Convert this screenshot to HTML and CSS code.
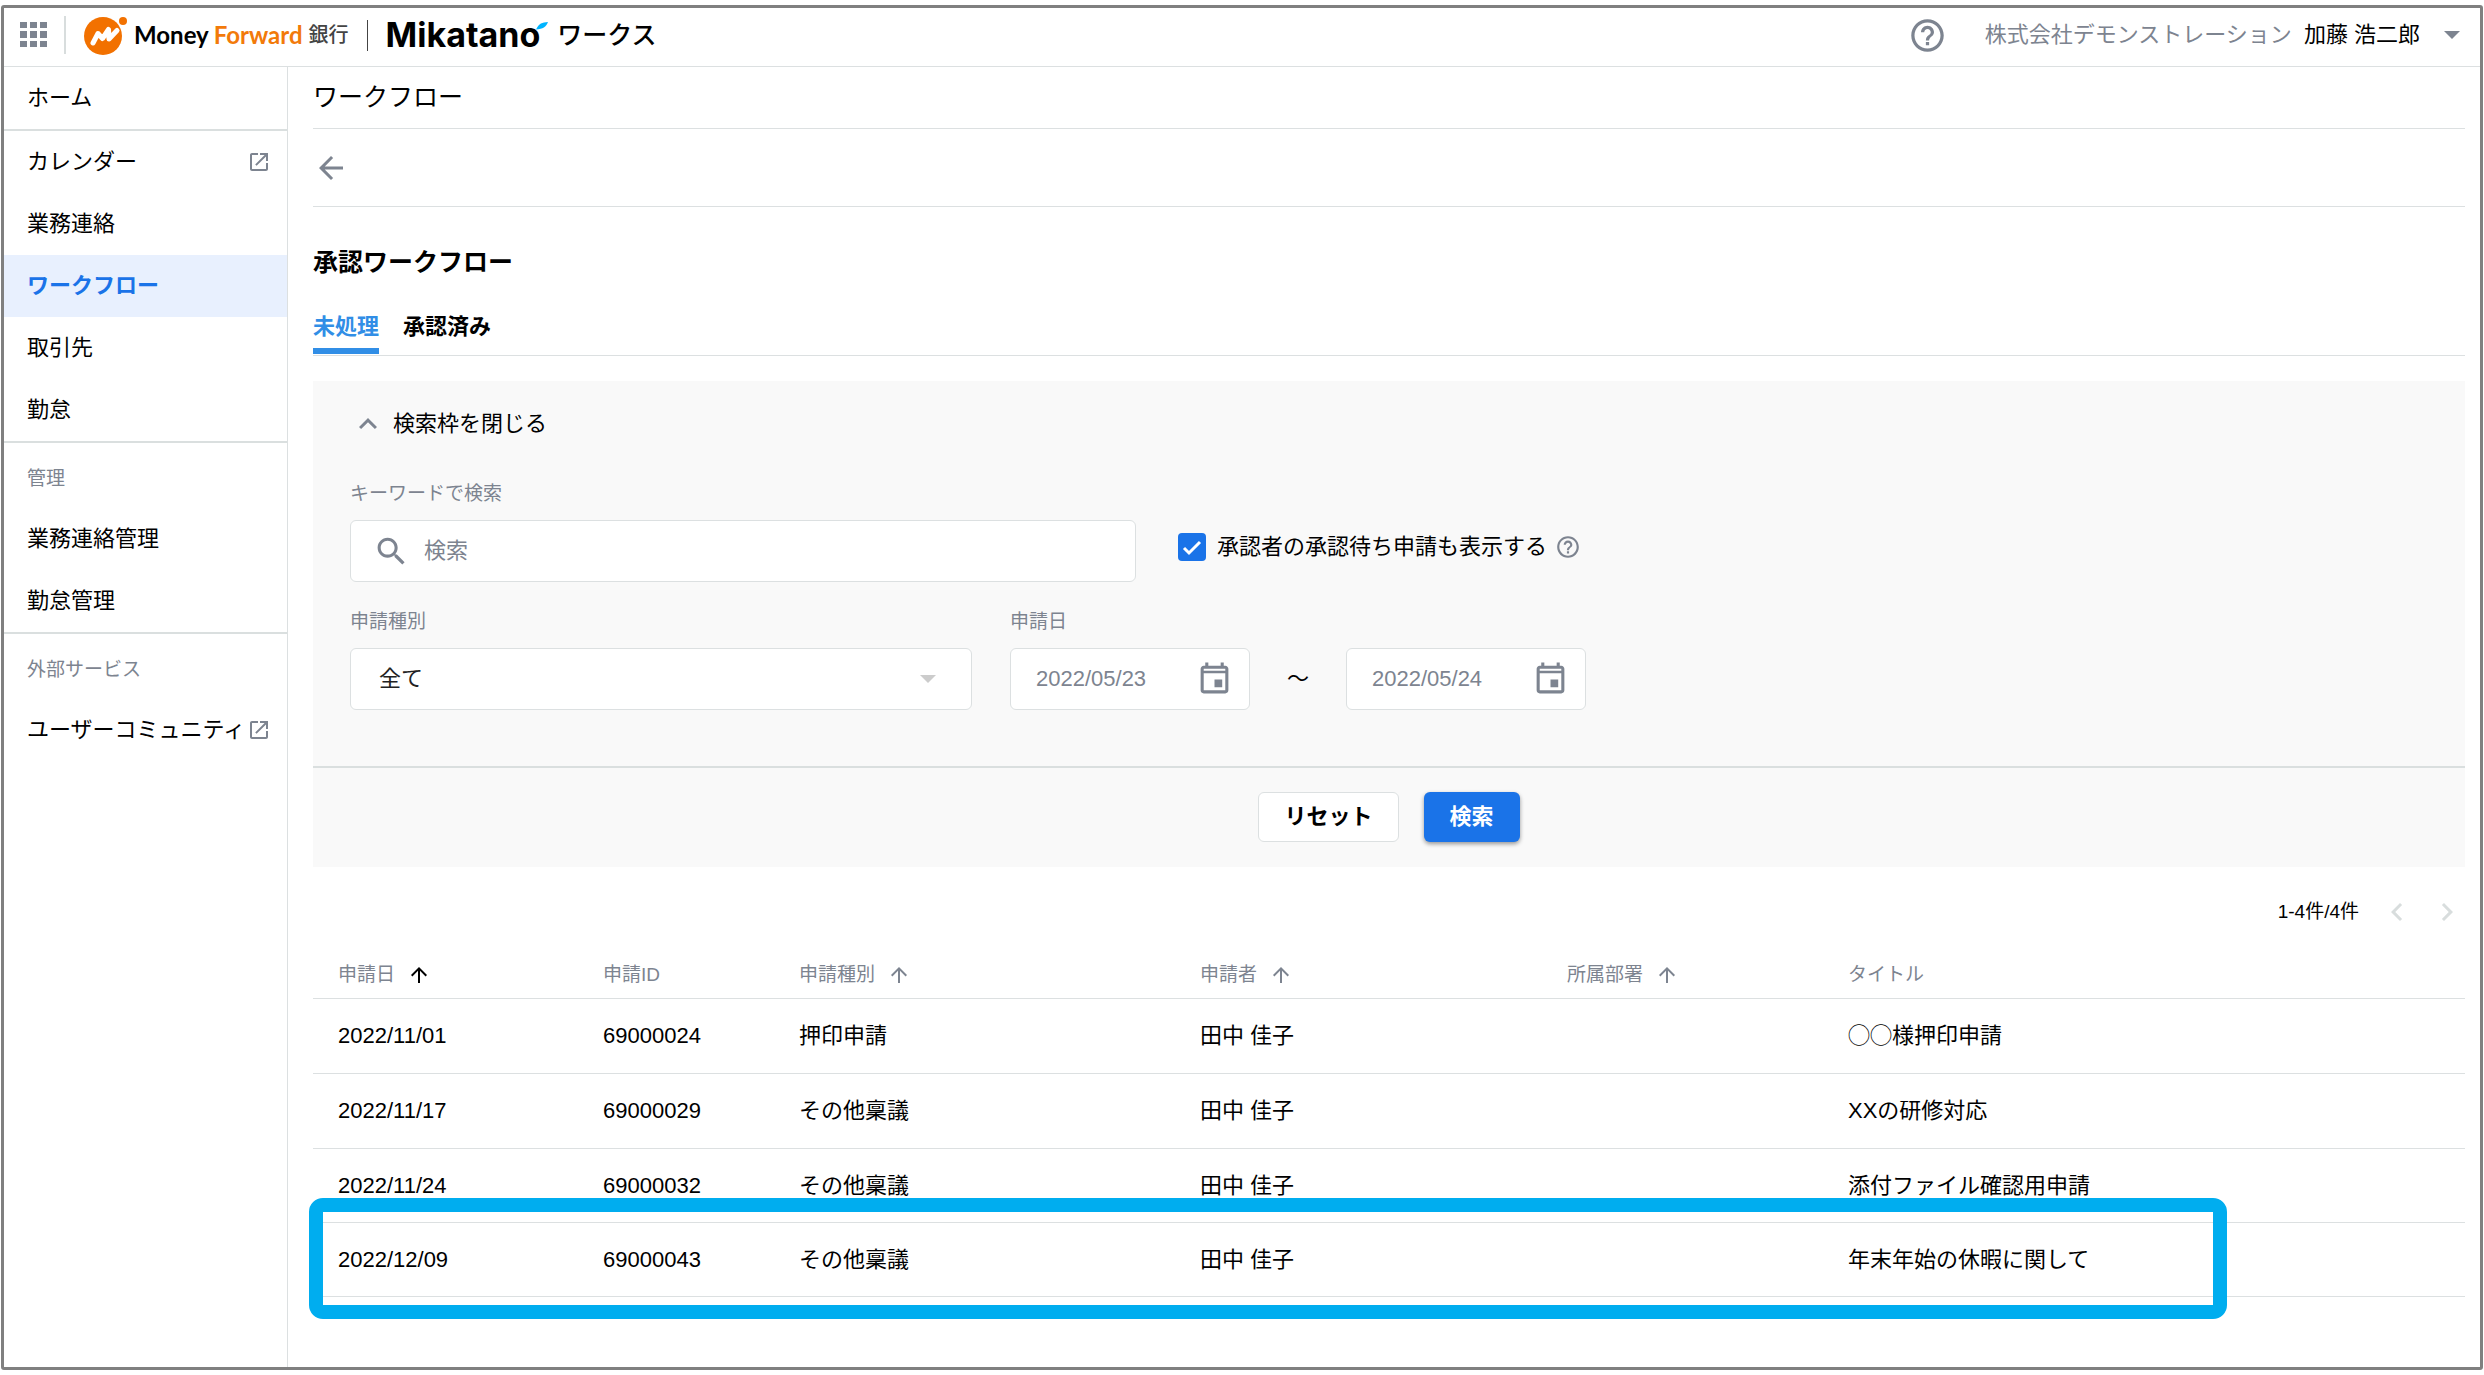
FILE: index.html
```html
<!DOCTYPE html>
<html lang="ja">
<head>
<meta charset="utf-8">
<title>承認ワークフロー</title>
<link rel="stylesheet" href="styles.css">
</head>
<body>
<svg class="sprite" aria-hidden="true">
  <symbol id="external" viewBox="0 0 24 24"><path d="M19 19H5V5h6V3H5c-1.1 0-2 .9-2 2v14c0 1.1.9 2 2 2h14c1.1 0 2-.9 2-2v-6h-2v6zM13 3v2h4.600l-9.400 9.400 1.400 1.400L19 6.400V11h2V3z"/></symbol>
  <symbol id="up" viewBox="0 0 24 24"><path d="M4 12l1.410 1.410L11 7.830V20h2V7.830l5.580 5.590L20 12l-8-8z"/></symbol>
  <symbol id="help" viewBox="0 0 24 24"><path d="M11 18h2v-2h-2v2zm1-16C6.480 2 2 6.480 2 12s4.480 10 10 10 10-4.480 10-10S17.520 2 12 2zm0 18c-4.410 0-8-3.590-8-8s3.590-8 8-8 8 3.590 8 8-3.590 8-8 8zm0-14c-2.210 0-4 1.790-4 4h2c0-1.100.9-2 2-2s2 .9 2 2c0 2-3 1.750-3 5h2c0-2.250 3-2.500 3-5 0-2.210-1.790-4-4-4z"/></symbol>
  <symbol id="calendar" viewBox="0 0 24 24"><path d="M17 12h-5v5h5v-5zM16 1v2H8V1H6v2H5c-1.110 0-1.990.9-1.990 2L3 19c0 1.100.890 2 2 2h14c1.100 0 2-.9 2-2V5c0-1.100-.9-2-2-2h-1V1h-2zm3 18H5V8h14v11zM5 5h14v1.300H5z" fill-rule="evenodd"/></symbol>
</svg>
<div class="frame">
  <header class="topbar">
    <button class="apps" type="button" aria-label="アプリ一覧">
      <svg width="27" height="26" viewBox="0 0 27 26"><path d="M0 0h7v6H0zM10 0h7v6h-7zM20 0h7v6h-7zM0 9h7v7H0zM10 9h7v7h-7zM20 9h7v7h-7zM0 19h7v6H0zM10 19h7v6h-7zM20 19h7v6h-7z"/></svg>
    </button>
    <a class="brand" href="#">
      <svg class="mark" width="44" height="40" viewBox="0 0 44 40">
        <circle cx="19" cy="21" r="19" fill="#f27100"/>
        <circle cx="39" cy="6" r="4" fill="#f27100"/>
        <path d="M9 28L14 18.500l4.500 5L24.500 14.500l.5 9.500L33 15.500" fill="none" stroke="#fff" stroke-width="5" stroke-linejoin="round" stroke-linecap="round"/>
      </svg>
      <span class="money">Money</span>
      <span class="forward">Forward</span>
      <span class="bank">銀行</span>
      <span class="brand-line"></span>
      <span class="mikatano">Mikatano</span>
      <svg class="leaf" width="12" height="8" viewBox="0 0 12 8"><path d="M0 7.500C3 1.500 6 .2 12 0 10 5 7 7 0 7.500z" fill="#00b4ff"/></svg>
      <span class="works">ワークス</span>
    </a>
    <button class="help" type="button" aria-label="ヘルプ"><svg width="39" height="39"><use href="#help"/></svg></button>
    <button class="account" type="button">
      <span class="company">株式会社デモンストレーション</span>
      <span class="person">加藤 浩二郎</span>
      <svg class="caret" width="16" height="8" viewBox="0 0 16 8"><path d="M0 0h16L8 8z"/></svg>
    </button>
  </header>
  <div class="body">
    <nav class="side">
      <a class="item" href="#">ホーム</a>
      <hr>
      <a class="item" href="#">カレンダー<svg width="24" height="24"><use href="#external"/></svg></a>
      <a class="item" href="#">業務連絡</a>
      <a class="item current" href="#">ワークフロー</a>
      <a class="item" href="#">取引先</a>
      <a class="item" href="#">勤怠</a>
      <hr>
      <p class="group">管理</p>
      <a class="item" href="#">業務連絡管理</a>
      <a class="item" href="#">勤怠管理</a>
      <hr>
      <p class="group">外部サービス</p>
      <a class="item" href="#">ユーザーコミュニティ<svg width="24" height="24"><use href="#external"/></svg></a>
    </nav>
    <main class="main">
      <h1 class="title">ワークフロー</h1>
      <div class="back-row">
        <button class="back" type="button" aria-label="戻る"><svg width="36" height="36" viewBox="0 0 24 24"><path d="M20 11H7.830l5.590-5.590L12 4l-8 8 8 8 1.410-1.410L7.830 13H20v-2z"/></svg></button>
      </div>
      <h2 class="heading">承認ワークフロー</h2>
      <div class="tabs">
        <a class="tab active" href="#">未処理</a>
        <a class="tab" href="#">承認済み</a>
      </div>
      <form class="panel">
        <div class="filters">
          <button class="toggle" type="button"><svg width="36" height="36" viewBox="0 0 24 24"><path d="M12 8l-6 6 1.410 1.410L12 10.830l4.590 4.580L18 14z"/></svg>検索枠を閉じる</button>
          <div class="row">
            <div class="field">
              <label for="keyword">キーワードで検索</label>
              <div class="box keyword">
                <svg width="37" height="37" viewBox="0 0 24 24"><path d="M15.500 14h-.790l-.280-.270C15.410 12.590 16 11.110 16 9.500 16 5.910 13.090 3 9.500 3S3 5.910 3 9.500 5.910 16 9.500 16c1.610 0 3.090-.590 4.230-1.570l.270.280v.790l5 4.990L20.490 19l-4.990-5zm-6 0C7.010 14 5 11.990 5 9.500S7.010 5 9.500 5 14 7.010 14 9.500 11.990 14 9.500 14z"/></svg>
                <input id="keyword" type="text" placeholder="検索">
              </div>
            </div>
            <div class="check">
              <input id="pending" type="checkbox" checked>
              <label for="pending">承認者の承認待ち申請も表示する</label>
              <svg width="26" height="26"><use href="#help"/></svg>
            </div>
          </div>
          <div class="row lower">
            <div class="field">
              <label for="kind">申請種別</label>
              <div class="box kind">
                <select id="kind"><option>全て</option></select>
                <svg class="drop" width="16" height="8" viewBox="0 0 16 8"><path d="M0 0h16L8 8z"/></svg>
              </div>
            </div>
            <div class="field">
              <label for="from">申請日</label>
              <div class="range">
                <div class="box date"><input id="from" type="text" value="2022/05/23"><svg width="37" height="37"><use href="#calendar"/></svg></div>
                <span class="tilde">〜</span>
                <div class="box date"><input type="text" aria-label="申請日（終了）" value="2022/05/24"><svg width="37" height="37"><use href="#calendar"/></svg></div>
              </div>
            </div>
          </div>
        </div>
        <div class="actions">
          <button class="btn reset" type="reset">リセット</button>
          <button class="btn search" type="button">検索</button>
        </div>
      </form>
      <div class="pager">
        <span>1-4件/4件</span>
        <button type="button" aria-label="前へ" disabled><svg width="36" height="36" viewBox="0 0 24 24"><path d="M15.410 7.410L14 6l-6 6 6 6 1.410-1.410L10.830 12z"/></svg></button>
        <button type="button" aria-label="次へ" disabled><svg width="36" height="36" viewBox="0 0 24 24"><path d="M10 6L8.590 7.410 13.170 12l-4.580 4.590L10 18l6-6z"/></svg></button>
      </div>
      <div class="list">
        <table>
          <colgroup><col class="c-date"><col class="c-id"><col class="c-kind"><col class="c-name"><col class="c-dept"><col></colgroup>
          <thead>
            <tr>
              <th class="sorted">申請日<svg width="24" height="24"><use href="#up"/></svg></th>
              <th>申請ID</th>
              <th>申請種別<svg width="24" height="24"><use href="#up"/></svg></th>
              <th>申請者<svg width="24" height="24"><use href="#up"/></svg></th>
              <th>所属部署<svg width="24" height="24"><use href="#up"/></svg></th>
              <th>タイトル</th>
            </tr>
          </thead>
          <tbody>
            <tr><td>2022/11/01</td><td>69000024</td><td>押印申請</td><td>田中 佳子</td><td></td><td>◯◯様押印申請</td></tr>
            <tr><td>2022/11/17</td><td>69000029</td><td>その他稟議</td><td>田中 佳子</td><td></td><td>XXの研修対応</td></tr>
            <tr><td>2022/11/24</td><td>69000032</td><td>その他稟議</td><td>田中 佳子</td><td></td><td>添付ファイル確認用申請</td></tr>
            <tr><td>2022/12/09</td><td>69000043</td><td>その他稟議</td><td>田中 佳子</td><td></td><td>年末年始の休暇に関して</td></tr>
          </tbody>
        </table>
        <div class="highlight"></div>
      </div>
    </main>
  </div>
</div>
</body>
</html>
```
FILE: styles.css
```css
* { box-sizing: border-box; }

body {
  margin: 0;
  background: #fff;
  color: #000;
  font: 22px/30px "Liberation Sans", "Noto Sans CJK JP", sans-serif;
}

a { color: inherit; text-decoration: none; }
h1, h2, p { margin: 0; }
svg { display: block; flex: none; fill: #7d8490; }
.sprite { display: none; }

button {
  border: 0;
  padding: 0;
  background: none;
  color: inherit;
  font: inherit;
}

input, select { font: inherit; }

.frame {
  display: flex;
  flex-direction: column;
  min-height: calc(100vh - 10px);
  margin: 5px 1px;
  border: 3px solid #808080;
  border-radius: 3px;
}

/* Top bar */
.topbar {
  display: flex;
  align-items: center;
  height: 59px;
  padding: 0 20px 4px 16px;
  border-bottom: 1px solid #dce0e1;
}

.apps {
  display: flex;
  align-items: center;
  height: 38px;
  padding-right: 17px;
  border-right: 2px solid #d8dddd;
}

.brand {
  display: flex;
  align-items: center;
  margin-right: auto;
  padding-left: 18px;
  white-space: nowrap;
}

.mark { margin-right: 6px; }

.money, .forward {
  font: bold 24px/30px Lato, sans-serif;
}

.forward { margin-left: 5px; color: #f27a0a; }
.bank { margin-left: 6px; color: #444; font-size: 20px; font-weight: 500; }
.brand-line { width: 1px; height: 31px; margin: 0 18px; background: #444; }
.mikatano { font: bold 34px/30px Inter, sans-serif; }
.leaf { align-self: flex-start; margin: 7px 0 0 -4px; }
.works { margin-left: 9px; font-size: 25px; font-weight: 500; }

.help { margin-right: 38px; }

.account { display: flex; align-items: center; gap: 12px; }
.company { color: #7d8490; }
.caret { margin-left: 12px; }

/* Side menu */
.body { display: flex; flex: 1; }

.side {
  flex: none;
  width: 284px;
  border-right: 1px solid #dce0e1;
}

.side hr {
  height: 2px;
  margin: 0;
  border: 0;
  background: #dadfdf;
}

.item {
  display: flex;
  align-items: center;
  justify-content: space-between;
  height: 62px;
  padding: 0 16px 0 23px;
  white-space: nowrap;
}

.current { background: #e8f0fe; color: #1a73e8; font-weight: bold; }

.group {
  height: 65px;
  padding: 21px 23px 0;
  color: #7d8490;
  font-size: 19px;
}

/* Content */
.main { flex: 1; min-width: 0; padding: 0 15px 40px 25px; }

.title {
  height: 62px;
  padding: 15px 0;
  border-bottom: 1px solid #dce0e1;
  font-size: 25px;
  font-weight: normal;
}

.back-row {
  display: flex;
  align-items: center;
  height: 78px;
  border-bottom: 1px solid #dce0e1;
}

.heading {
  margin-top: 40px;
  font-size: 25px;
}

.tabs {
  display: flex;
  gap: 24px;
  margin-top: 35px;
  padding-bottom: 1px;
  border-bottom: 1px solid #dce0e1;
  font-weight: bold;
}

.tab { padding-bottom: 6px; border-bottom: 6px solid transparent; }
.active { border-color: #318ee6; color: #318ee6; }

/* Search panel */
.panel { margin-top: 25px; background: #f9f9f9; }
.filters { padding: 25px 37px 56px; border-bottom: 2px solid #dadfdf; }
.toggle { display: flex; align-items: center; gap: 7px; }

.row { display: flex; align-items: flex-end; margin-top: 40px; }
.lower { gap: 38px; margin-top: 28px; }

.field > label {
  display: block;
  margin-bottom: 14px;
  color: #7d8490;
  font-size: 19px;
  line-height: 24px;
}

.box {
  display: flex;
  align-items: center;
  height: 62px;
  border: 1px solid #dce0e1;
  border-radius: 6px;
  background: #fff;
}

.box input, .box select {
  flex: 1;
  min-width: 0;
  height: 100%;
  padding: 0;
  border: 0;
  outline: 0;
  background: none;
  color: #7d8490;
}

.box ::placeholder { color: #7d8490; opacity: 1; }

.keyword { width: 786px; gap: 14px; padding: 0 22px; }
.kind { width: 622px; padding: 0 35px 0 28px; }
.box select { appearance: none; color: #222; }
.drop { fill: #ccc; }

.check { display: flex; align-items: center; height: 70px; margin-left: 42px; }

.check input {
  appearance: none;
  width: 28px;
  height: 28px;
  margin: 0 11px 0 0;
  border-radius: 4px;
  background: #1a73e8 url("data:image/svg+xml,%3Csvg xmlns='http://www.w3.org/2000/svg' viewBox='0 0 28 28'%3E%3Cpath d='M6 15l5 5L22 9' fill='none' stroke='white' stroke-width='3'/%3E%3C/svg%3E") center / 28px 28px;
}

.check svg { margin-left: 8px; }

.range { display: flex; align-items: center; }
.date { width: 240px; padding: 0 16px 0 25px; }
.tilde { width: 96px; text-align: center; }

.actions {
  display: flex;
  justify-content: center;
  gap: 25px;
  padding: 24px 0 25px;
}

.btn { height: 50px; padding: 0 26px; border-radius: 6px; font-weight: bold; }
.reset { padding: 0 25px; border: 1px solid #dce0e1; background: #fff; }
.search { background: #1a73e8; color: #fff; box-shadow: 0 2px 4px rgba(0, 0, 0, .4); }

/* Result list */
.pager {
  display: flex;
  align-items: center;
  justify-content: flex-end;
  height: 84px;
  padding-top: 5px;
  font-size: 19px;
}

.pager span { margin-right: 20px; }
.pager button + button { margin-left: 14px; }
.pager svg { fill: #d8dddd; }

.list { position: relative; }

table { width: 100%; table-layout: fixed; border-spacing: 0; }

.c-date { width: 265px; }
.c-id { width: 196px; }
.c-kind { width: 401px; }
.c-name { width: 367px; }
.c-dept { width: 281px; }

th, td {
  padding: 0 0 0 25px;
  border-bottom: 1px solid #dce0e1;
  text-align: left;
  white-space: nowrap;
}

th { height: 48px; color: #7d8490; font-size: 19px; font-weight: normal; }
th svg { display: inline-block; margin-left: 12px; vertical-align: middle; }
.sorted svg { fill: #000; }
td { height: 75px; }
tbody tr:nth-child(n+3) td { height: 74px; }

.highlight {
  position: absolute;
  right: 238px;
  bottom: -22px;
  left: -4px;
  height: 121px;
  border: 14px solid #00adef;
  border-radius: 14px;
  pointer-events: none;
}
```
